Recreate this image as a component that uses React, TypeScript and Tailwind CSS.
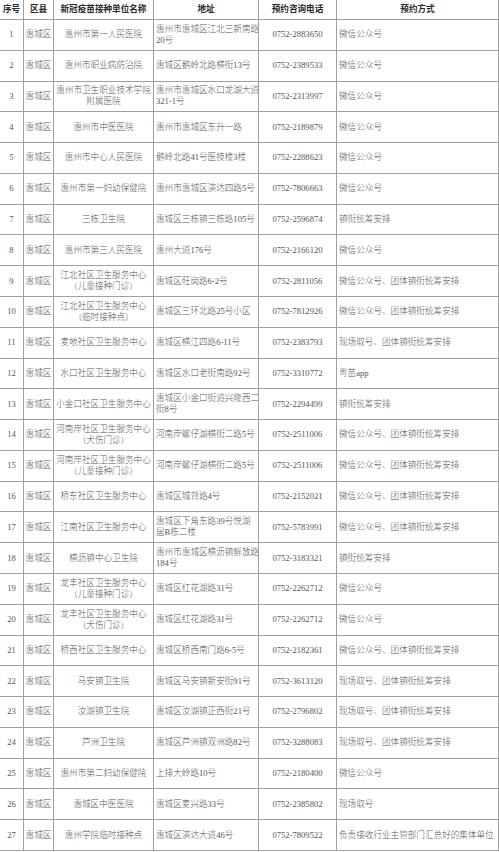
import React from "react";

type Row = [string, string, string, string, string];

const rows: Row[] = [
  ["1", "惠州市第一人民医院", "惠州市惠城区江北三新南路\n20号", "0752-2883650", "微信公众号"],
  ["2", "惠州市职业病防治院", "惠城区鹅岭北路横街13号", "0752-2389533", "微信公众号"],
  ["3", "惠州市卫生职业技术学院\n附属医院", "惠州市惠城区水口龙湖大道\n321-1号", "0752-2313997", "微信公众号"],
  ["4", "惠州市中医医院", "惠州市惠城区东升一路", "0752-2189879", "微信公众号"],
  ["5", "惠州市中心人民医院", "鹅岭北路41号医技楼3楼", "0752-2288623", "微信公众号"],
  ["6", "惠州市第一妇幼保健院", "惠州市惠城区演达四路5号", "0752-7806663", "微信公众号"],
  ["7", "三栋卫生院", "惠城区三栋镇三栋路105号", "0752-2596874", "镇街统筹安排"],
  ["8", "惠州市第三人民医院", "惠州大道176号", "0752-2166120", "微信公众号"],
  ["9", "江北社区卫生服务中心\n（儿童接种门诊）", "惠城区旺岗路6-2号", "0752-2811056", "微信公众号、团体镇街统筹安排"],
  ["10", "江北社区卫生服务中心\n（临时接种点）", "惠城区三环北路25号小区", "0752-7812926", "微信公众号、团体镇街统筹安排"],
  ["11", "麦地社区卫生服务中心", "惠城区横江四路6-11号", "0752-2383793", "现场取号、团体镇街统筹安排"],
  ["12", "水口社区卫生服务中心", "惠城区水口老街南路92号", "0752-3310772", "粤苗app"],
  ["13", "小金口社区卫生服务中心", "惠城区小金口街道兴隆西二\n街8号", "0752-2294499", "镇街统筹安排"],
  ["14", "河南岸社区卫生服务中心\n（犬伤门诊）", "河南岸螺仔湖横街二路5号", "0752-2511006", "微信公众号、团体镇街统筹安排"],
  ["15", "河南岸社区卫生服务中心\n（儿童接种门诊）", "河南岸螺仔湖横街二路5号", "0752-2511006", "微信公众号、团体镇街统筹安排"],
  ["16", "桥东社区卫生服务中心", "惠城区城背路4号", "0752-2152021", "微信公众号、团体镇街统筹安排"],
  ["17", "江南社区卫生服务中心", "惠城区下角东路39号悦湖\n居B栋二楼", "0752-5783991", "微信公众号、团体镇街统筹安排"],
  ["18", "横沥镇中心卫生院", "惠州市惠城区横沥镇解放路\n184号", "0752-3183321", "镇街统筹安排"],
  ["19", "龙丰社区卫生服务中心\n（儿童接种门诊）", "惠城区红花湖路31号", "0752-2262712", "微信公众号"],
  ["20", "龙丰社区卫生服务中心\n（犬伤门诊）", "惠城区红花湖路31号", "0752-2262712", "微信公众号"],
  ["21", "桥西社区卫生服务中心", "惠城区桥西南门路6-5号", "0752-2182361", "微信公众号、团体镇街统筹安排"],
  ["22", "马安镇卫生院", "惠城区马安镇新安街91号", "0752-3613120", "现场取号、团体镇街统筹安排"],
  ["23", "汝湖镇卫生院", "惠城区汝湖镇正西街21号", "0752-2796802", "现场取号、团体镇街统筹安排"],
  ["24", "芦洲卫生院", "惠城区芦洲镇双洲路82号", "0752-3288083", "现场取号、团体镇街统筹安排"],
  ["25", "惠州市第二妇幼保健院", "上排大岭路10号", "0752-2180400", "微信公众号"],
  ["26", "惠城区中医医院", "惠城区麦兴路33号", "0752-2385802", "现场取号"],
  ["27", "惠州学院临时接种点", "惠城区演达大道46号", "0752-7809522", "负责接收行业主管部门汇总好的集体单位"],
];

const cell = "border-r border-b border-[#a0a0a0] flex items-center overflow-hidden whitespace-pre leading-[11px]";

function Lines({ text }: { text: string }) {
  const parts = text.split("\n");
  return (
    <div>
      {parts.map((p, i) => (
        <div key={i}>{p}</div>
      ))}
    </div>
  );
}

export default function App() {
  const headers = ["序号", "区县", "新冠疫苗接种单位名称", "地址", "预约咨询电话", "预约方式"];
  return (
    <div className="w-[499px] h-[852px] bg-white overflow-hidden">
      <div
        className="grid grid-cols-[24px_30px_100px_105px_78px_162px] grid-rows-[20px_repeat(27,minmax(0,1fr))] h-[851px] text-[8.6px] font-light text-[#555555]"
        style={{ fontFamily: '"Liberation Serif", "Noto Sans CJK SC", serif' }}
      >
        {headers.map((h) => (
          <div
            key={h}
            className={`${cell} font-bold text-[#2a2a2a] justify-center`}
          >
            {h}
          </div>
        ))}
        {rows.map((r) => (
          <React.Fragment key={r[0]}>
            <div className={`${cell} justify-center`}>{r[0]}</div>
            <div className={`${cell} justify-center`}>惠城区</div>
            <div className={`${cell} justify-center text-center`}>
              <Lines text={r[1]} />
            </div>
            <div className={`${cell} justify-start pl-[2px]`}>
              <Lines text={r[2]} />
            </div>
            <div className={`${cell} justify-center`}>{r[3]}</div>
            <div className={`${cell} justify-start pl-[2px]`}>{r[4]}</div>
          </React.Fragment>
        ))}
      </div>
    </div>
  );
}
